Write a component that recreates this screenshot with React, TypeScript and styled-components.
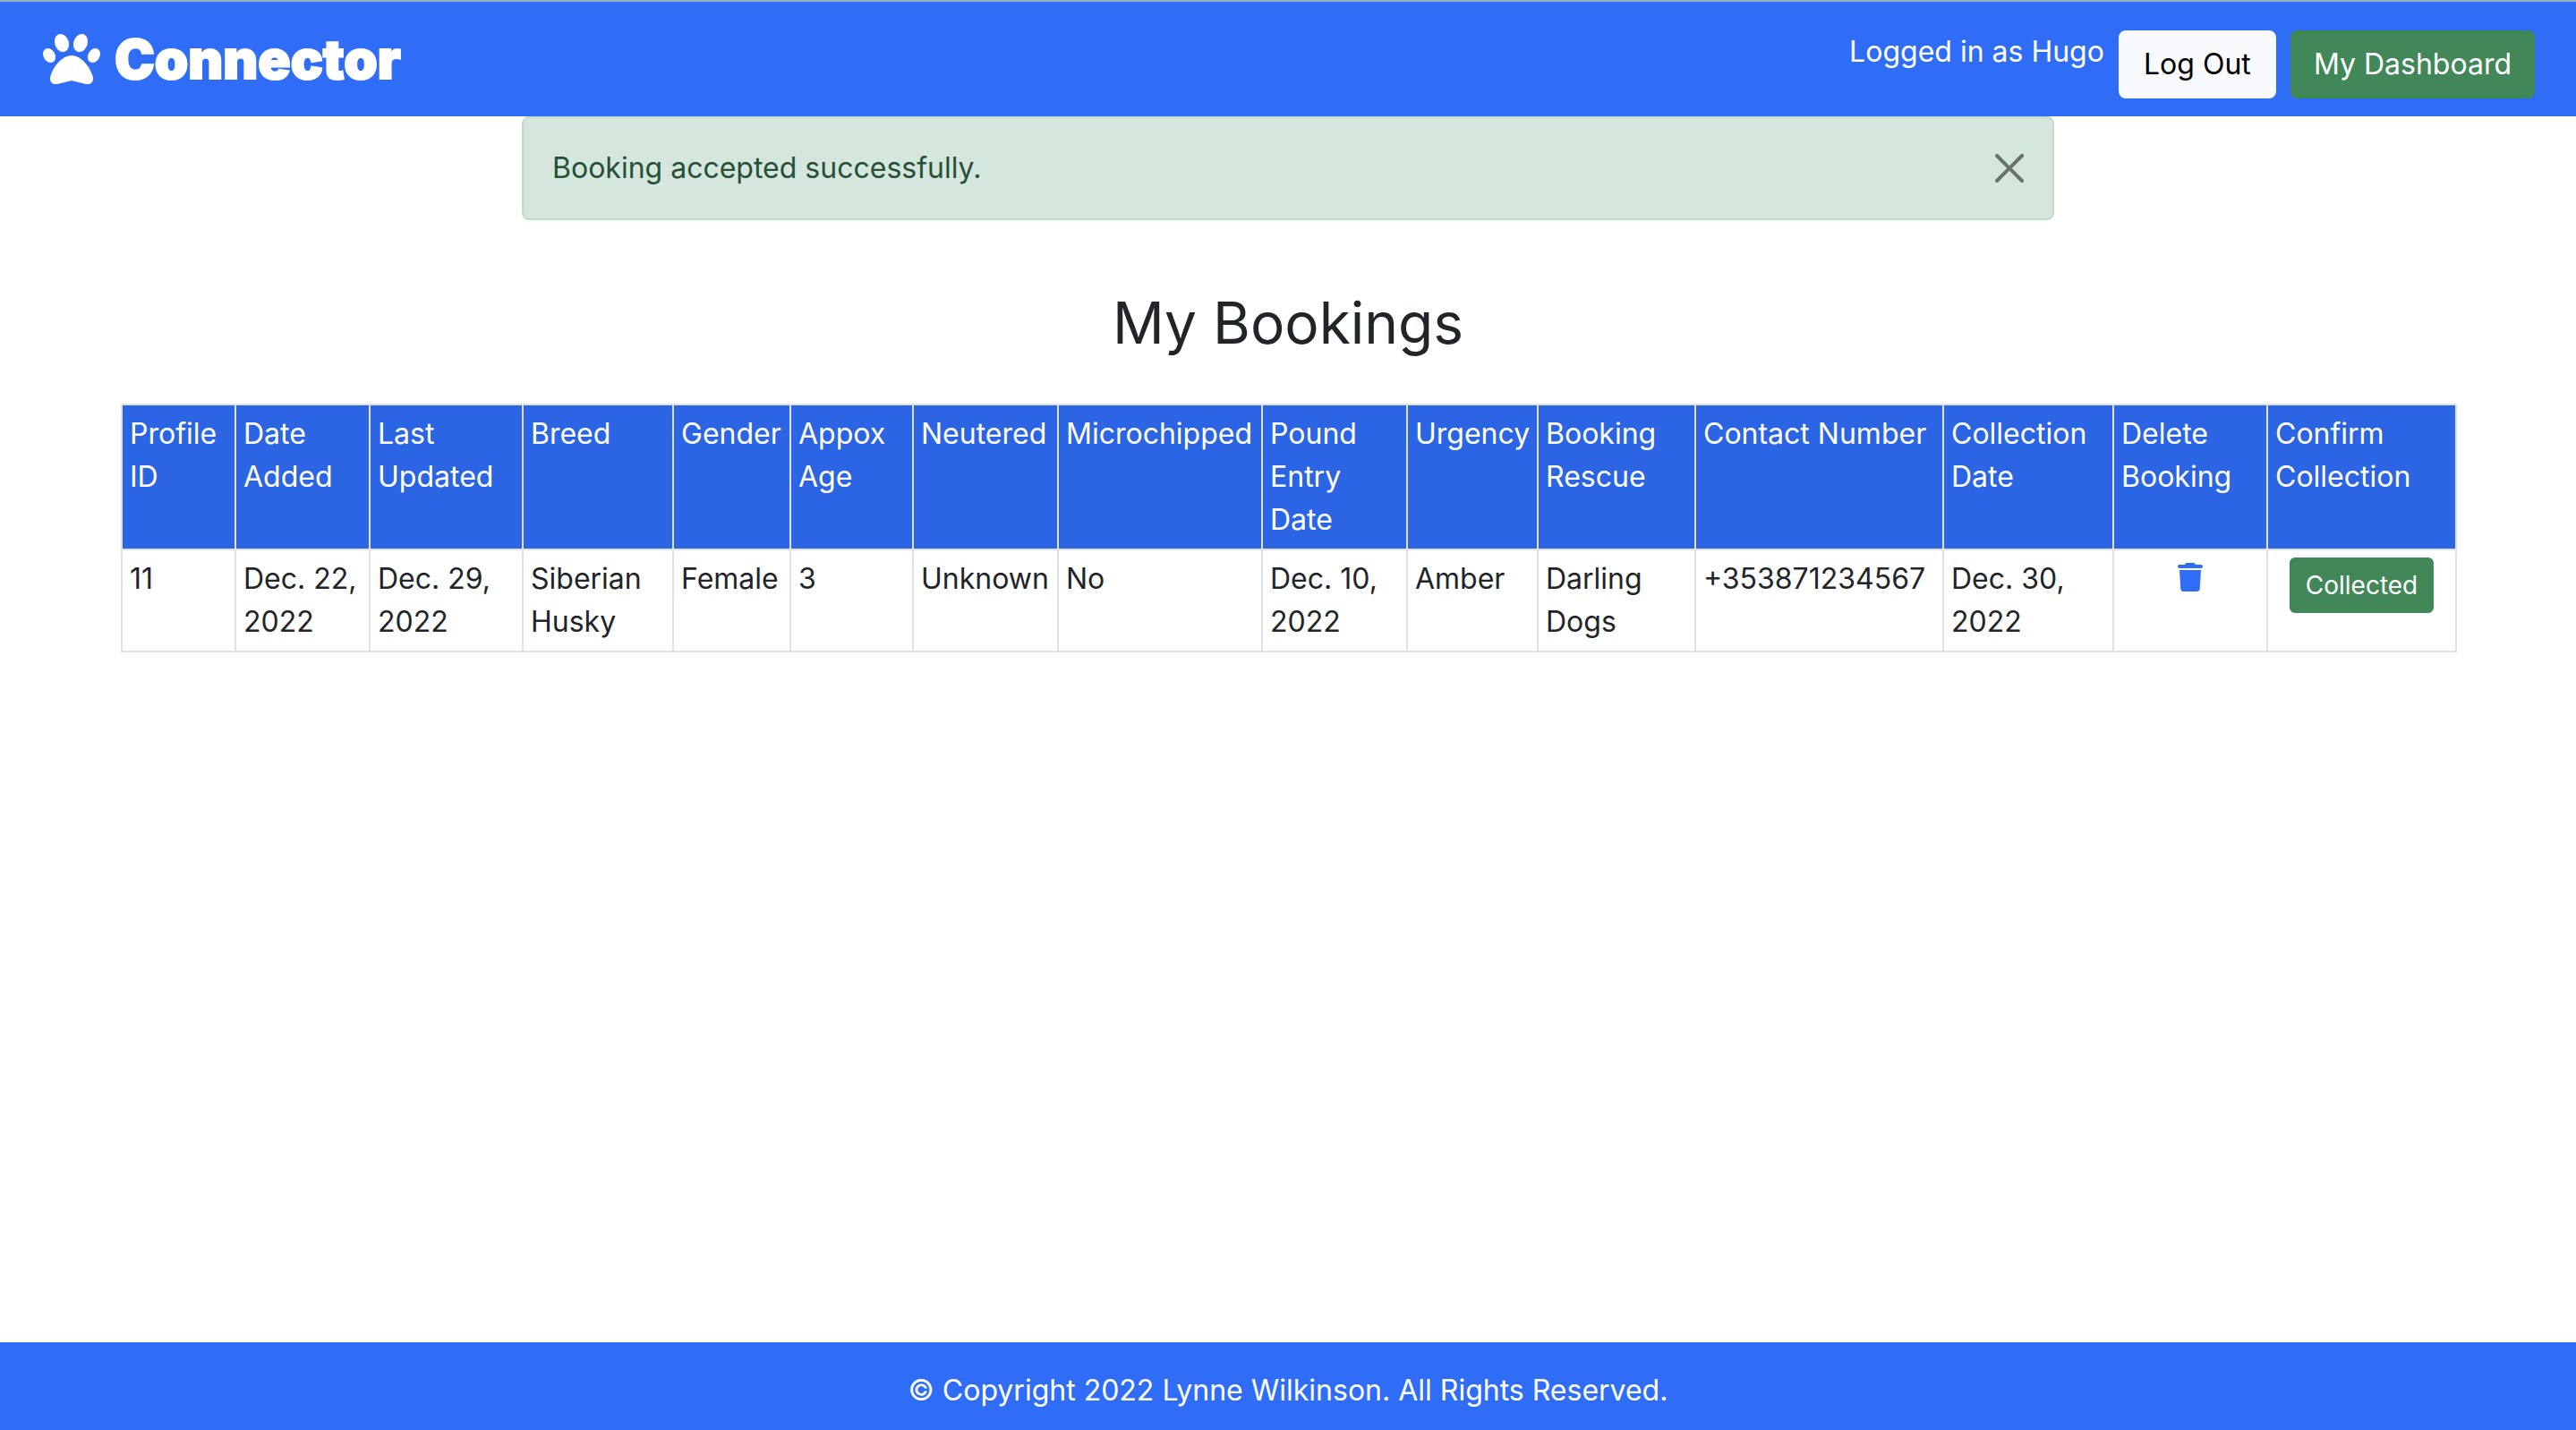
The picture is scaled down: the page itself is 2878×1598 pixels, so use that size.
import React, { useState } from "react";
import styled, { createGlobalStyle } from "styled-components";
import { FaPaw, FaTrash } from "react-icons/fa6";

const blue = "#306df6";
const green = "#418758";
const line = "#dee2e6";

const GlobalStyle = createGlobalStyle`
  *, *::before, *::after { box-sizing: border-box; }
  body {
    margin: 0;
    background: #fff;
    color: #212529;
    font: 400 32px/48px Inter, "Open Sans", sans-serif;
  }
  button { font-family: inherit; }
`;

const Page = styled.div`
  display: flex;
  flex-direction: column;
  min-height: 100vh;
`;

const Header = styled.header`
  display: flex;
  justify-content: space-between;
  align-items: flex-start;
  padding: 32px 46px 20px 48px;
  background: ${blue};
  border-top: 2px solid #98b1b8;
`;

const Brand = styled.a`
  display: flex;
  align-items: center;
  gap: 16px;
  color: #fff;
  font-size: 60px;
  line-height: 64px;
  font-weight: 900;
  text-decoration: none;
`;

const BrandName = styled.span`
  -webkit-text-stroke: 2px #fff;
  stroke-linejoin: round;
`;

const Account = styled.nav`
  display: flex;
  align-items: flex-start;
  gap: 16px;
  color: #fff;
`;

const Button = styled.button<{ $bg: string; $fg: string; $small?: boolean }>`
  min-width: ${(p) => (p.$small ? 160 : 176)}px;
  padding: ${(p) => (p.$small ? "8px 16px" : "12px 24px")};
  border: 2px solid ${(p) => p.$bg};
  border-radius: ${(p) => (p.$small ? 6 : 8)}px;
  background: ${(p) => p.$bg};
  color: ${(p) => p.$fg};
  font-size: ${(p) => (p.$small ? 28 : 32)}px;
  line-height: ${(p) => (p.$small ? 42 : 48)}px;
  white-space: nowrap;
  cursor: pointer;
`;

const Main = styled.main`
  flex: 1;
  width: 100%;
  max-width: 2640px;
  margin: 0 auto;
  padding: 0 16px;
`;

const Alert = styled.div`
  display: flex;
  justify-content: space-between;
  align-items: center;
  max-width: 1712px;
  margin: 0 auto;
  padding: 32px;
  border: 2px solid #c1dacd;
  border-radius: 8px;
  background: #d5e6dd;
  color: #255138;
`;

const Close = styled.button`
  display: flex;
  padding: 0;
  border: 0;
  background: none;
  color: #000;
  opacity: 0.5;
  cursor: pointer;
`;

const Title = styled.h1`
  margin: 76px 0 52px;
  font-size: 64px;
  line-height: 77px;
  font-weight: 400;
  text-align: center;
`;

const Table = styled.table`
  width: 100%;
  table-layout: fixed;
  border-collapse: collapse;
`;

const Col = styled.col<{ $width: number }>`
  width: ${(p) => p.$width}px;
`;

const HeadCell = styled.th`
  padding: 8px;
  border: 2px solid ${line};
  background: #2c65e3;
  color: #fff;
  font-weight: 400;
  text-align: left;
  vertical-align: top;
`;

const Cell = styled.td<{ $center?: boolean }>`
  padding: 8px;
  border: 2px solid ${line};
  text-align: ${(p) => (p.$center ? "center" : "left")};
  vertical-align: top;
`;

const IconLink = styled.a`
  display: flex;
  justify-content: center;
  padding: 6px 0;
  color: ${blue};
`;

const Footer = styled.footer`
  padding: 30px 24px 20px;
  background: ${blue};
  color: #fff;
  text-align: center;
`;

const columns: { label: string; width: number; value: string }[] = [
  { label: "Profile ID", width: 127, value: "11" },
  { label: "Date Added", width: 150, value: "Dec. 22, 2022" },
  { label: "Last Updated", width: 171, value: "Dec. 29, 2022" },
  { label: "Breed", width: 168, value: "Siberian Husky" },
  { label: "Gender", width: 131, value: "Female" },
  { label: "Appox Age", width: 137, value: "3" },
  { label: "Neutered", width: 162, value: "Unknown" },
  { label: "Microchipped", width: 228, value: "No" },
  { label: "Pound Entry Date", width: 162, value: "Dec. 10, 2022" },
  { label: "Urgency", width: 146, value: "Amber" },
  { label: "Booking Rescue", width: 176, value: "Darling Dogs" },
  { label: "Contact Number", width: 277, value: "+353871234567" },
  { label: "Collection Date", width: 190, value: "Dec. 30, 2022" },
];

export default function App() {
  const [alertOpen, setAlertOpen] = useState(true);
  return (
    <Page>
      <GlobalStyle />
      <Header>
        <Brand href="#">
          <FaPaw size={64} aria-hidden />
          <BrandName>Connector</BrandName>
        </Brand>
        <Account>
          <span>Logged in as Hugo</span>
          <Button $bg="#f9fafd" $fg="#000">Log Out</Button>
          <Button $bg={green} $fg="#fff">My Dashboard</Button>
        </Account>
      </Header>
      <Main>
        {alertOpen && (
          <Alert role="alert">
            <span>Booking accepted successfully.</span>
            <Close aria-label="Close" onClick={() => setAlertOpen(false)}>
              <svg width="32" height="32" viewBox="0 0 16 16" fill="currentColor" aria-hidden>
                <path d="M.293.293a1 1 0 011.414 0L8 6.586 14.293.293a1 1 0 111.414 1.414L9.414 8l6.293 6.293a1 1 0 01-1.414 1.414L8 9.414l-6.293 6.293a1 1 0 01-1.414-1.414L6.586 8 .293 1.707a1 1 0 010-1.414z" />
              </svg>
            </Close>
          </Alert>
        )}
        <Title>My Bookings</Title>
        <Table>
          <colgroup>
            {columns.map((c) => (
              <Col key={c.label} $width={c.width} />
            ))}
            <Col $width={172} />
            <Col $width={211} />
          </colgroup>
          <thead>
            <tr>
              {columns.map((c) => (
                <HeadCell key={c.label} scope="col">{c.label}</HeadCell>
              ))}
              <HeadCell scope="col">Delete Booking</HeadCell>
              <HeadCell scope="col">Confirm Collection</HeadCell>
            </tr>
          </thead>
          <tbody>
            <tr>
              {columns.map((c) => (
                <Cell key={c.label}>{c.value}</Cell>
              ))}
              <Cell $center>
                <IconLink href="#" aria-label="Delete booking">
                  <FaTrash size={32} aria-hidden />
                </IconLink>
              </Cell>
              <Cell $center>
                <Button $small $bg={green} $fg="#fff">Collected</Button>
              </Cell>
            </tr>
          </tbody>
        </Table>
      </Main>
      <Footer>© Copyright 2022 Lynne Wilkinson. All Rights Reserved.</Footer>
    </Page>
  );
}
